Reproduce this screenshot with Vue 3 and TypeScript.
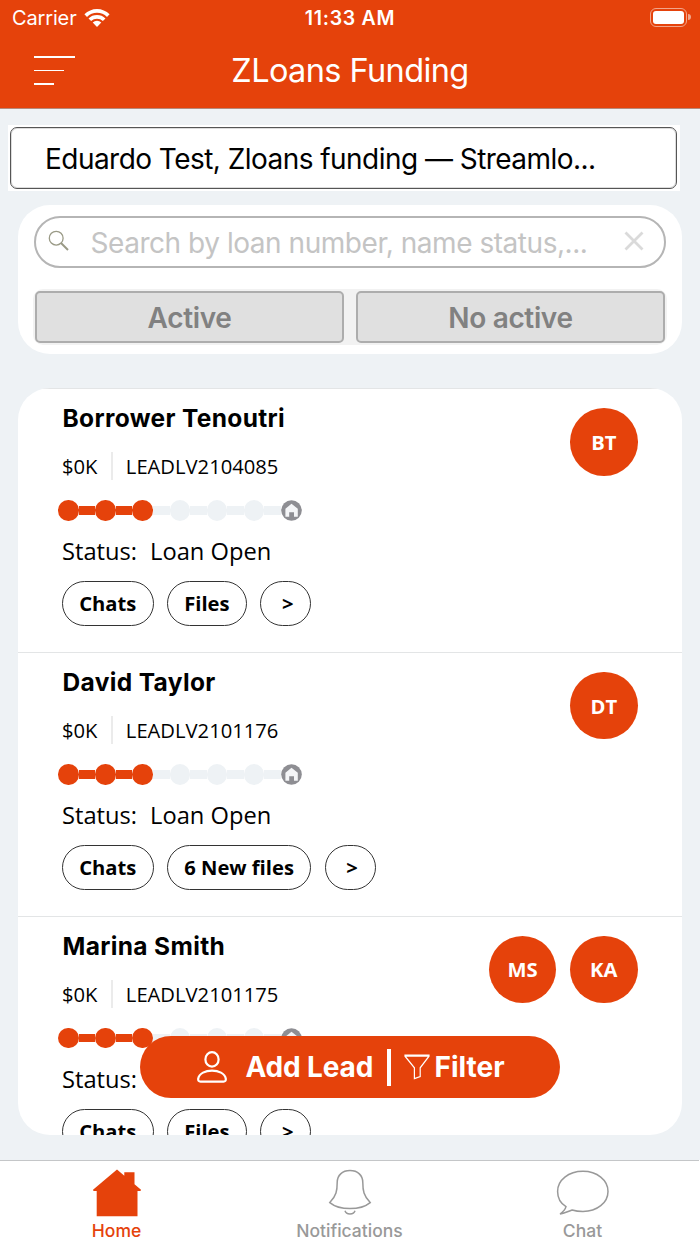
<template>
  <div class="screen">
    <header class="header">
      <div class="status-bar">
        <div class="carrier">
          <span class="carrier-name">Carrier</span>
          <svg class="wifi" viewBox="0 0 26 19">
            <path d="M0.4 6.2 A18 18 0 0 1 25.6 6.2 L23 8.9 A14.4 14.4 0 0 0 3 8.9 Z" />
            <path d="M4.5 10.4 A12.2 12.2 0 0 1 21.5 10.4 L18.9 13 A8.6 8.6 0 0 0 7.1 13 Z" />
            <path d="M8.7 14.6 A6.2 6.2 0 0 1 17.3 14.6 L13 18.9 Z" />
          </svg>
        </div>
        <span class="time">11:33 AM</span>
        <div class="battery-wrap">
          <div class="battery"><div class="battery-level"></div></div>
          <div class="battery-cap"></div>
        </div>
      </div>
      <div class="title-bar">
        <div class="menu">
          <span class="line line-1"></span>
          <span class="line line-2"></span>
          <span class="line line-3"></span>
        </div>
        <h1 class="title">ZLoans Funding</h1>
      </div>
    </header>

    <main class="content">
      <div class="picker-wrap">
        <div class="picker">Eduardo Test, Zloans funding — Streamlo...</div>
      </div>

      <section class="search-card">
        <div class="search">
          <svg class="search-icon" viewBox="0 0 22 22">
            <circle cx="8.2" cy="8.2" r="6.9" />
            <path d="M13 13 L20 20" class="handle" />
          </svg>
          <span class="placeholder">Search by loan number, name status,...</span>
          <svg class="clear" viewBox="0 0 20 20"><path d="M1.5 1.5 L18.5 18.5 M18.5 1.5 L1.5 18.5" /></svg>
        </div>
        <div class="segments">
          <button class="segment">Active</button>
          <button class="segment">No active</button>
        </div>
      </section>

      <section class="list">
        <article v-for="loan in loans" :key="loan.number" class="loan">
          <div class="loan-info">
            <h2 class="name">{{ loan.name }}</h2>
            <div class="meta">
              <span class="amount">{{ loan.amount }}</span>
              <span class="number">{{ loan.number }}</span>
            </div>
            <div class="progress">
              <template v-for="n in 6" :key="n">
                <span class="dot" :class="{ done: n <= loan.step }"></span>
                <span class="bar" :class="{ done: n < loan.step }"></span>
              </template>
              <svg class="goal" viewBox="0 0 21 21">
                <circle cx="10.5" cy="10.5" r="10.3" fill="#8e8e93" />
                <path d="M10.5 3.8 L16.8 8.8 V16.8 H13 V12.2 H8.2 V16.8 H4.4 V8.8 Z" fill="#f4f5f7" />
              </svg>
            </div>
            <div class="status"><span>Status:</span><span>{{ loan.status }}</span></div>
            <div class="actions">
              <button class="pill">Chats</button>
              <button class="pill">{{ loan.files }}</button>
              <button class="pill more">&gt;</button>
            </div>
          </div>
          <div class="avatars">
            <span v-for="person in loan.people" :key="person" class="avatar">{{ person }}</span>
          </div>
        </article>
      </section>

      <div class="fab">
        <svg class="person" viewBox="0 0 30 32">
          <ellipse cx="15" cy="8.4" rx="6.6" ry="7.2" />
          <path d="M1.2 27.8 C3 16.8 27 16.8 28.8 27.8 C29 29.6 28.2 30.6 26.5 30.6 H3.5 C1.8 30.6 1 29.6 1.2 27.8 Z" />
        </svg>
        <span class="fab-text add">Add Lead</span>
        <span class="fab-divider"></span>
        <svg class="funnel" viewBox="0 0 26 26">
          <path d="M1 1 H25 V2.2 L16.2 13.8 V22.6 L10.4 24.6 V13.8 L1 2.2 Z M1 2.2 H25" />
        </svg>
        <span class="fab-text">Filter</span>
      </div>
    </main>

    <nav class="tabs">
      <a class="tab selected">
        <svg class="tab-icon" viewBox="0 0 54 48">
          <path d="M27 0.5 L34.3 6.8 V3.2 H44.5 V15.3 L51 20.8 L50.5 22 H47.5 V47.3 H6.7 V22 H3.5 L3 20.8 Z" />
        </svg>
        <span>Home</span>
      </a>
      <a class="tab">
        <svg class="tab-icon" viewBox="0 0 54 48">
          <path d="M27 1.6 C19.2 1.6 14.2 6.3 14.2 13.5 C14.2 21.5 13.4 26.6 6.8 33.6 C16.5 41.6 37.5 41.6 47.2 33.6 C40.6 26.6 39.8 21.5 39.8 13.5 C39.8 6.3 34.8 1.6 27 1.6 Z M22 41.8 C23.2 46 30.8 46 32 41.8" />
        </svg>
        <span>Notifications</span>
      </a>
      <a class="tab">
        <svg class="tab-icon" viewBox="0 0 54 48">
          <path d="M27 2.3 C12.5 2.3 1.6 11 1.6 22.4 C1.6 29.2 4.8 34.4 10 37.6 C9.4 40 7.1 42.7 4 45 C9 44 13 42.2 16.2 41 C19.5 42.1 23 42.5 27 42.5 C41 42.5 52 33.7 52 22.4 C52 11 41 2.3 27 2.3 Z" />
        </svg>
        <span>Chat</span>
      </a>
    </nav>
  </div>
</template>

<script setup lang="ts">
interface Loan {
  name: string;
  amount: string;
  number: string;
  step: number;
  status: string;
  files: string;
  people: string[];
}

const loans: Loan[] = [
  { name: 'Borrower Tenoutri', amount: '$0K', number: 'LEADLV2104085', step: 3, status: 'Loan Open', files: 'Files', people: ['BT'] },
  { name: 'David Taylor', amount: '$0K', number: 'LEADLV2101176', step: 3, status: 'Loan Open', files: '6 New files', people: ['DT'] },
  { name: 'Marina Smith', amount: '$0K', number: 'LEADLV2101175', step: 3, status: 'Loan Open', files: 'Files', people: ['MS', 'KA'] },
];
</script>

<style>
body {
  margin: 0;
}
</style>

<style scoped>
.screen {
  display: flex;
  flex-direction: column;
  width: 700px;
  height: 1244px;
  overflow: hidden;
  background: #eef2f5;
  color: #000;
  font-family: Inter, sans-serif;
}

.screen * {
  box-sizing: border-box;
}

button {
  margin: 0;
  font-family: inherit;
  color: inherit;
}

/* header */
.header {
  flex: none;
  height: 109px;
  background: #e5420b;
  border-bottom: 1px solid #b5897b;
  color: #fff;
}

.status-bar {
  display: grid;
  grid-template-columns: 1fr auto 1fr;
  align-items: center;
  height: 36px;
  padding: 0 9px 0 12px;
}

.carrier {
  display: flex;
  align-items: center;
  gap: 7.5px;
  font-size: 20px;
  letter-spacing: -0.15px;
}

.wifi {
  width: 26px;
  height: 19px;
  margin-top: -2px;
  fill: #fff;
}

.time {
  margin-left: -3px;
  font-size: 19.5px;
  font-weight: 600;
  letter-spacing: 0.75px;
}

.battery-wrap {
  display: flex;
  align-items: center;
  justify-content: flex-end;
  gap: 1px;
  margin-top: -2px;
}

.battery {
  width: 37px;
  height: 19px;
  padding: 2px;
  border: 1px solid #f2a58a;
  border-radius: 6px;
}

.battery-level {
  height: 13px;
  background: #fff;
  border-radius: 3px;
}

.battery-cap {
  width: 3px;
  height: 6px;
  background: #f2a58a;
  border-radius: 0 3px 3px 0;
}

.title-bar {
  display: grid;
  grid-template-columns: 80px 1fr 80px;
  align-items: center;
  height: 68px;
}

.menu {
  display: flex;
  flex-direction: column;
  gap: 12px;
  padding: 1px 0 0 34px;
}

.line {
  height: 1.6px;
  background: #fff;
}

.line-1 { width: 41px; }
.line-2 { width: 30px; }
.line-3 { width: 20px; }

.title {
  margin: 0;
  text-align: center;
  font-size: 32.5px;
  font-weight: 400;
  letter-spacing: -0.6px;
}

/* company picker */
.content {
  position: relative;
  flex: 1;
  min-height: 0;
  padding: 16px 18px 0;
}

.picker-wrap {
  width: 672px;
  height: 66px;
  margin-left: -10px;
  padding: 2px 3px 2px 2px;
  background: #fff;
}

.picker {
  display: flex;
  align-items: center;
  height: 62px;
  padding: 2px 34px 0;
  border: 1.5px solid #555;
  border-radius: 7px;
  box-shadow: inset 0 0 0 1px #dcdcdc;
  font-size: 28px;
  letter-spacing: -0.54px;
  white-space: nowrap;
}

/* search */
.search-card {
  height: 149px;
  margin-top: 14px;
  padding: 11px 15px 0;
  background: #fff;
  border-radius: 32px;
}

.search {
  display: flex;
  align-items: center;
  height: 52px;
  margin: 0 1px;
  padding: 0 20px 0 12px;
  border: 2px solid #b5b5b5;
  border-radius: 26px;
}

.search-icon {
  width: 22px;
  height: 22px;
  margin-top: -2px;
  fill: none;
  stroke: #9a9a86;
  stroke-width: 1.3;
}

.search-icon .handle {
  stroke-width: 1.9;
}

.placeholder {
  flex: 1;
  padding: 1px 0 0 20.5px;
  color: #c4c4c4;
  font-size: 28px;
  letter-spacing: -0.46px;
  white-space: nowrap;
}

.clear {
  width: 20px;
  height: 20px;
  margin-top: -2px;
  fill: none;
  stroke: #dadada;
  stroke-width: 2.8;
}

.segments {
  display: grid;
  grid-template-columns: 1fr 1fr;
  gap: 12px;
  height: 56px;
  margin-top: 21px;
  padding: 2px;
  background: #f2f2f2;
  border-radius: 10px;
}

.segment {
  padding: 1px 0 0;
  background: #e0e0e0;
  border: 2px solid #adadad;
  border-radius: 5px;
  color: #818181;
  font-size: 28px;
  font-weight: 600;
  letter-spacing: -0.35px;
}

/* loans */
.list {
  height: 746.6px;
  margin-top: 34.4px;
  overflow: hidden;
  background: #fff;
  border-radius: 32px;
}

.loan {
  display: flex;
  justify-content: space-between;
  height: 263.8px;
  padding: 0 44px;
  border-top: 1.5px solid #e3e5e6;
  font-family: "Open Sans", "Noto Sans", sans-serif;
}

.name {
  height: 32px;
  margin: 12.6px 0 0 0.5px;
  font-family: Inter, sans-serif;
  font-size: 24.5px;
  font-weight: 700;
  letter-spacing: 0.35px;
  line-height: 32px;
}

.meta {
  display: flex;
  align-items: stretch;
  height: 28px;
  margin-top: 18px;
  font-size: 20.2px;
  line-height: 28px;
}

.amount {
  padding-right: 13.4px;
  border-right: 2px solid #ebebeb;
}

.number {
  padding-left: 13px;
}

.progress {
  display: flex;
  align-items: center;
  width: 244px;
  height: 21px;
  margin: 20px 0 0 -4px;
}

.dot {
  flex: none;
  width: 20.5px;
  height: 20.5px;
  background: #eef2f5;
  border-radius: 50%;
}

.bar {
  flex: 1;
  height: 8.5px;
  background: #eef2f5;
}

.dot.done,
.bar.done {
  background: #e5420b;
}

.goal {
  flex: none;
  width: 21px;
  height: 21px;
}

.status {
  display: flex;
  gap: 13px;
  height: 32px;
  margin-top: 14px;
  font-size: 23.7px;
  line-height: 32px;
}

.actions {
  display: flex;
  gap: 13.5px;
  margin-top: 14px;
}

.pill {
  height: 45px;
  padding: 0 16.2px 1px;
  background: #fff;
  border: 1.2px solid #333;
  border-radius: 23px;
  font-size: 20.2px;
  font-weight: 700;
}

.pill.more {
  width: 51px;
  padding: 0 0 1px 4px;
}

.avatars {
  display: flex;
  gap: 13.5px;
  margin-right: 0.4px;
  padding-top: 18.6px;
}

.avatar {
  display: flex;
  align-items: center;
  justify-content: center;
  width: 67.7px;
  height: 67.7px;
  background: #e5420b;
  border-radius: 50%;
  color: #fff;
  font-size: 20.2px;
  font-weight: 700;
}

/* floating actions */
.fab {
  position: absolute;
  left: 140px;
  top: 927px;
  display: flex;
  align-items: center;
  width: 420px;
  height: 62px;
  padding-left: 57px;
  background: #e5420b;
  border-radius: 31px;
  color: #fff;
}

.person {
  width: 30px;
  height: 32px;
  fill: none;
  stroke: #fff;
  stroke-width: 2.2;
}

.fab-text {
  font-size: 28px;
  font-weight: 700;
  white-space: nowrap;
}

.fab-text.add {
  width: 127px;
  margin-left: 18.5px;
  letter-spacing: -0.15px;
}

.fab-divider {
  width: 3.5px;
  height: 37px;
  margin-left: 14.5px;
  background: #fff;
}

.funnel {
  width: 26px;
  height: 26px;
  margin: 0 5px 0 13px;
  fill: none;
  stroke: #fff;
  stroke-width: 1.2;
}

/* tab bar */
.tabs {
  display: grid;
  grid-template-columns: repeat(3, 1fr);
  flex: none;
  width: 699px;
  height: 84px;
  background: #fff;
  border-top: 1.5px solid #c4c6c8;
  box-shadow: 1px 0 #fff;
}

.tab {
  display: flex;
  flex-direction: column;
  align-items: center;
  padding-top: 8px;
  color: #999;
  font-size: 17.5px;
  font-weight: 500;
  line-height: 24px;
}

.tab-icon {
  width: 54px;
  height: 48px;
  margin-bottom: 2px;
  fill: none;
  stroke: #999;
  stroke-width: 1.5;
}

.tab.selected {
  color: #e5420b;
}

.tab.selected .tab-icon {
  fill: #e5420b;
  stroke: none;
}
</style>
